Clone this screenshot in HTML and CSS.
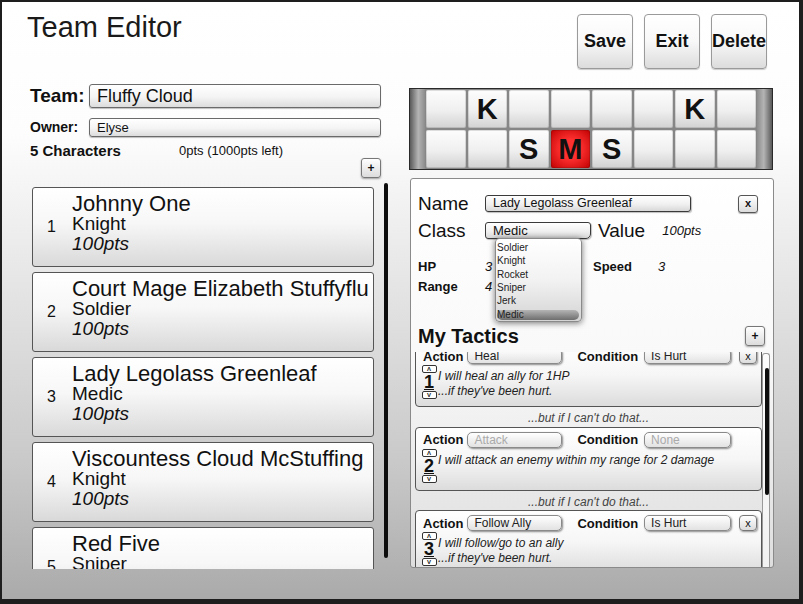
FILE: index.html
```html
<!DOCTYPE html>
<html>
<head>
<meta charset="utf-8">
<title>Team Editor</title>
<link rel="stylesheet" href="styles.css">
</head>
<body>
<div class="app">
  <header class="top">
    <h1 class="title">Team Editor</h1>
    <div class="actions">
      <button class="big-btn">Save</button>
      <button class="big-btn">Exit</button>
      <button class="big-btn">Delete</button>
    </div>
  </header>
  <div class="main">
    <section class="left">
      <div class="team-row">
        <span class="lbl-team">Team:</span>
        <div class="input team-input">Fluffy Cloud</div>
      </div>
      <div class="owner-row">
        <span class="lbl-owner">Owner:</span>
        <div class="input owner-input">Elyse</div>
      </div>
      <div class="count-row">
        <span class="count">5 Characters</span>
        <span class="pts-left">0pts (1000pts left)</span>
      </div>
      <div class="add-row"><button class="small-btn">+</button></div>
      <div class="list-wrap">
        <div class="list">
          <div class="card">
            <div class="card-num">1</div>
            <div class="card-info">
              <div class="c-name">Johnny One</div>
              <div class="c-class">Knight</div>
              <div class="c-pts">100pts</div>
            </div>
          </div>
          <div class="card">
            <div class="card-num">2</div>
            <div class="card-info">
              <div class="c-name">Court Mage Elizabeth Stuffyflu</div>
              <div class="c-class">Soldier</div>
              <div class="c-pts">100pts</div>
            </div>
          </div>
          <div class="card">
            <div class="card-num">3</div>
            <div class="card-info">
              <div class="c-name">Lady Legolass Greenleaf</div>
              <div class="c-class">Medic</div>
              <div class="c-pts">100pts</div>
            </div>
          </div>
          <div class="card">
            <div class="card-num">4</div>
            <div class="card-info">
              <div class="c-name">Viscountess Cloud McStuffing</div>
              <div class="c-class">Knight</div>
              <div class="c-pts">100pts</div>
            </div>
          </div>
          <div class="card">
            <div class="card-num">5</div>
            <div class="card-info">
              <div class="c-name">Red Five</div>
              <div class="c-class">Sniper</div>
              <div class="c-pts">100pts</div>
            </div>
          </div>
        </div>
        <div class="scrollbar"></div>
      </div>
    </section>

    <section class="right">
      <div class="board">
        <div class="cap"></div>
        <div class="cells">
          <div class="cell"></div><div class="cell">K</div><div class="cell"></div><div class="cell"></div>
          <div class="cell"></div><div class="cell"></div><div class="cell">K</div><div class="cell"></div>
          <div class="cell"></div><div class="cell"></div><div class="cell">S</div><div class="cell red">M</div>
          <div class="cell">S</div><div class="cell"></div><div class="cell"></div><div class="cell"></div>
        </div>
        <div class="cap cap-r"></div>
      </div>

      <div class="detail">
        <div class="name-row">
          <span class="d-lbl">Name</span>
          <div class="d-input">Lady Legolass Greenleaf</div>
          <button class="x-btn">x</button>
        </div>
        <div class="class-row">
          <span class="d-lbl">Class</span>
          <div class="sel-wrap">
            <div class="d-select">Medic</div>
            <div class="dropdown">
              <div class="opt">Soldier</div>
              <div class="opt">Knight</div>
              <div class="opt">Rocket</div>
              <div class="opt">Sniper</div>
              <div class="opt">Jerk</div>
              <div class="opt opt-sel">Medic</div>
            </div>
          </div>
          <span class="value-lbl">Value</span>
          <span class="value-pts">100pts</span>
        </div>
        <div class="stats">
          <span class="st-l">HP</span><span class="st-v">3</span>
          <span class="st-l">Speed</span><span class="st-v">3</span>
          <span class="st-l">Range</span><span class="st-v">4</span>
        </div>
        <div class="tac-head">
          <span class="tac-title">My Tactics</span>
          <button class="small-btn">+</button>
        </div>
        <div class="tac-view">
          <div class="tac-list">
            <div class="tac">
              <div class="tac-row">
                <span class="t-lbl">Action</span>
                <div class="t-sel act">Heal</div>
                <span class="t-lbl cond-lbl">Condition</span>
                <div class="t-sel cond">Is Hurt</div>
                <button class="t-x">x</button>
              </div>
              <div class="tac-body">
                <div class="arrows">
                  <div class="arr">&#923;</div>
                  <div class="t-num">1</div>
                  <div class="arr arr-d">V</div>
                </div>
                <div class="desc">
                  <div>I will heal an ally for 1HP</div>
                  <div>...if they've been hurt.</div>
                </div>
              </div>
            </div>
            <div class="sep">...but if I can't do that...</div>
            <div class="tac">
              <div class="tac-row">
                <span class="t-lbl">Action</span>
                <div class="t-sel act dim">Attack</div>
                <span class="t-lbl cond-lbl">Condition</span>
                <div class="t-sel cond dim">None</div>
              </div>
              <div class="tac-body">
                <div class="arrows">
                  <div class="arr">&#923;</div>
                  <div class="t-num">2</div>
                  <div class="arr arr-d">V</div>
                </div>
                <div class="desc">
                  <div>I will attack an enemy within my range for 2 damage</div>
                </div>
              </div>
            </div>
            <div class="sep">...but if I can't do that...</div>
            <div class="tac">
              <div class="tac-row">
                <span class="t-lbl">Action</span>
                <div class="t-sel act">Follow Ally</div>
                <span class="t-lbl cond-lbl">Condition</span>
                <div class="t-sel cond">Is Hurt</div>
                <button class="t-x">x</button>
              </div>
              <div class="tac-body">
                <div class="arrows">
                  <div class="arr">&#923;</div>
                  <div class="t-num">3</div>
                  <div class="arr arr-d">V</div>
                </div>
                <div class="desc">
                  <div>I will follow/go to an ally</div>
                  <div>...if they've been hurt.</div>
                </div>
              </div>
            </div>
          </div>
          <div class="track"><div class="thumb"></div></div>
        </div>
      </div>
    </section>
  </div>
</div>
</body>
</html>
```

FILE: styles.css
```css
* { box-sizing: border-box; }
html, body { margin: 0; padding: 0; }
body {
  background: #1e1e1e;
  width: 803px;
  height: 604px;
  overflow: hidden;
  font-family: "Liberation Sans", Arial, sans-serif;
  color: #111;
}
button { font-family: "Liberation Sans", Arial, sans-serif; color: #111; cursor: pointer; }

.app {
  margin: 2px 0 0 2px;
  width: 797px;
  height: 597px;
  background: linear-gradient(to bottom, #ffffff 0%, #fdfdfd 22%, #c8c8c8 78%, #aaaaaa 100%);
  display: flex;
  flex-direction: column;
}

/* header */
.top { display: flex; height: 78px; flex: none; }
.title {
  margin: 11px 0 0 25px;
  font-size: 29px;
  font-weight: normal;
  line-height: 29px;
  color: #1a1a1a;
}
.actions { margin: 12px 32px 0 auto; display: flex; gap: 11px; align-items: flex-start; }
.big-btn {
  width: 56px;
  height: 55px;
  padding: 0;
  border: 1px solid #9a9a9a;
  border-radius: 4px;
  background: linear-gradient(#ffffff 0%, #f8f8f8 50%, #dcdcdc 100%);
  font-weight: bold;
  font-size: 18px;
  box-shadow: 0 1px 1px rgba(0,0,0,.2);
}

/* main */
.main { display: flex; flex: 1; min-height: 0; }
.left { width: 407px; padding: 0 28px 0 28px; flex: none; }

.team-row { display: flex; align-items: center; margin-top: 4px; height: 24px; }
.lbl-team { width: 59px; font-weight: bold; font-size: 19px; flex: none; }
.input {
  border: 1px solid #6a6a6a;
  border-radius: 3px;
  background: linear-gradient(#ffffff, #f4f4f4 55%, #dcdcdc);
  box-shadow: 0 1px 1px rgba(0,0,0,.25);
  color: #111;
}
.team-input { width: 297px; height: 24px; font-size: 18px; line-height: 22px; padding-left: 7px; }
.owner-row { display: flex; align-items: center; margin-top: 9px; height: 20px; }
.lbl-owner { width: 59px; font-weight: bold; font-size: 14px; flex: none; }
.owner-input { width: 297px; height: 19px; font-size: 13px; line-height: 17px; padding-left: 7px; }
.count-row { display: flex; margin-top: 6px; line-height: 15px; height: 15px; }
.count { width: 149px; font-weight: bold; font-size: 15px; flex: none; }
.pts-left { font-size: 13px; }
.add-row { display: flex; justify-content: flex-end; height: 20px; }

.small-btn {
  width: 20px;
  height: 20px;
  padding: 0;
  border: 1px solid #777;
  border-radius: 3px;
  background: linear-gradient(#ffffff, #dcdcdc);
  font-weight: bold;
  font-size: 12px;
  line-height: 18px;
  box-shadow: 0 1px 2px rgba(0,0,0,.35);
}

.list-wrap { display: flex; margin-top: 5px; }
.list { width: 342px; margin-left: 2px; height: 386px; padding-top: 4px; overflow: hidden; flex: none; }
.scrollbar { width: 4px; height: 375px; margin-left: 10px; background: #0d0d0d; border-radius: 2px; flex: none; }

.card {
  display: flex;
  height: 80px;
  margin-bottom: 5px;
  border: 1px solid #555;
  border-radius: 3px;
  background: linear-gradient(#ffffff 0%, #f7f7f7 45%, #d9d9d9 100%);
}
.card-num { width: 39px; flex: none; padding-left: 14px; font-size: 16px; line-height: 16px; align-self: center; }
.card-info { padding-top: 5px; white-space: nowrap; min-width: 0; overflow: hidden; }
.c-name { font-size: 22px; line-height: 21px; }
.c-class { font-size: 19px; line-height: 20px; }
.c-pts { font-size: 19px; line-height: 20px; font-style: italic; }

/* right column */
.right { width: 366px; margin-top: 8px; flex: none; }

.board { display: flex; width: 364px; height: 82px; border: 1px solid #2a2a2a; background: #868686; }
.cap { width: 15px; background: linear-gradient(to right, #5a5a5a, #b4b4b4 55%, #8c8c8c); }
.cap-r { background: linear-gradient(to left, #5a5a5a, #b4b4b4 55%, #8c8c8c); }
.cells {
  flex: 1;
  display: grid;
  grid-template-columns: repeat(8, 1fr);
  grid-template-rows: repeat(2, 1fr);
  gap: 2px;
  padding: 1px;
}
.cell {
  border-radius: 2px;
  background: linear-gradient(#fdfdfd 0%, #efefef 55%, #d2d2d2 100%);
  box-shadow: inset 0 0 0 1px rgba(0,0,0,.12);
  font-weight: bold;
  font-size: 29px;
  line-height: 38px;
  text-align: center;
  color: #111;
}
.cell.red { background: radial-gradient(ellipse at center, #ff3030 35%, #d41010 80%, #b00 100%); }

.detail {
  margin-top: 8px;
  margin-left: 1px;
  width: 364px;
  height: 390px;
  border: 1px solid #8a8a8a;
  border-radius: 3px;
  background: linear-gradient(#ffffff 0%, #f9f9f9 45%, #dedede 100%);
  padding: 15px 8px 0 7px;
  display: flex;
  flex-direction: column;
}
.name-row { display: flex; align-items: center; height: 19px; padding-right: 7px; flex: none; }
.d-lbl { width: 67px; font-size: 19px; line-height: 19px; flex: none; }
.d-input {
  width: 206px;
  height: 17px;
  border: 1px solid #3a3a3a;
  border-radius: 3px;
  background: linear-gradient(#ffffff, #f0f0f0 55%, #d8d8d8);
  box-shadow: 1px 1px 1px rgba(0,0,0,.25);
  font-size: 12.5px;
  line-height: 15px;
  padding-left: 7px;
}
.x-btn {
  margin-left: auto;
  width: 20px;
  height: 18px;
  padding: 0;
  border: 1px solid #555;
  border-radius: 3px;
  background: linear-gradient(#ffffff, #dcdcdc);
  font-weight: bold;
  font-size: 11px;
  line-height: 15px;
  box-shadow: 0 1px 1px rgba(0,0,0,.3);
}
.class-row { display: flex; align-items: center; margin-top: 8px; height: 19px; flex: none; position: relative; z-index: 2; }
.sel-wrap { position: relative; }
.d-select {
  width: 106px;
  height: 17px;
  border: 1px solid #3a3a3a;
  border-radius: 3px 3px 5px 3px;
  background: linear-gradient(#ffffff, #f0f0f0 55%, #d8d8d8);
  box-shadow: 1px 1px 1px rgba(0,0,0,.25);
  font-size: 13px;
  line-height: 15px;
  padding-left: 7px;
}
.dropdown {
  position: absolute;
  left: 10px;
  top: 16px;
  width: 87px;
  height: 84px;
  border: 1px solid #8a8a8a;
  border-radius: 4px;
  background: linear-gradient(#ffffff, #f2f2f2 50%, #d4d4d4);
  box-shadow: 0 1px 6px rgba(0,0,0,.55);
  padding: 2px 2px 0 1px;
  font-size: 10px;
  line-height: 13.3px;
  color: #222;
}
.opt-sel {
  margin-top: 3px;
  line-height: 10px;
  height: 10px;
  border-radius: 5px;
  background: linear-gradient(#b4b4b4, #6e6e6e);
  color: #222;
}
.value-lbl { margin-left: 7px; font-size: 19px; }
.value-pts { margin-left: 17px; font-size: 13px; font-style: italic; }

.stats {
  margin-top: 17px;
  display: grid;
  grid-template-columns: 67px 108px 65px auto;
  grid-auto-rows: 20px;
  line-height: 20px;
  font-size: 13px;
  flex: none;
}
.st-l { font-weight: bold; }
.st-v { font-style: italic; }

.tac-head { margin-top: 29px; height: 20px; display: flex; align-items: center; justify-content: space-between; flex: none; }
.tac-title { font-size: 20px; font-weight: bold; }

.tac-view { flex: 1; min-height: 0; margin: 6px -5px 0 -4px; display: flex; overflow: hidden; }
.tac-list { width: 348px; padding-left: 1px; margin-top: -9px; flex: none; }
.tac {
  height: 64px;
  border: 1px solid #555;
  border-radius: 4px;
  background: linear-gradient(#ffffff 0%, #f6f6f6 50%, #dcdcdc 100%);
}
.tac-row { display: flex; align-items: center; height: 16px; margin-top: 4px; padding-left: 7px; }
.t-lbl { font-weight: bold; font-size: 13px; }
.t-sel {
  height: 16px;
  border: 1px solid #8a8a8a;
  border-radius: 5px;
  background: linear-gradient(#ffffff, #e2e2e2);
  box-shadow: 1px 1px 2px rgba(0,0,0,.45);
  font-size: 12px;
  line-height: 14px;
  padding-left: 6px;
  color: #222;
}
.t-sel.act { width: 95px; margin-left: 4px; }
.t-sel.cond { width: 87px; margin-left: 6px; }
.t-sel.dim { color: #aaa; }
.cond-lbl { margin-left: 15px; }
.t-x {
  width: 18px;
  height: 16px;
  margin-left: 8px;
  padding: 0;
  border: 1px solid #777;
  border-radius: 4px;
  background: linear-gradient(#ffffff, #dcdcdc);
  box-shadow: 1px 1px 2px rgba(0,0,0,.4);
  font-size: 11px;
  line-height: 13px;
}
.tac-body { display: flex; }
.arrows { width: 16px; flex: none; margin-left: 5px; display: flex; flex-direction: column; align-items: center; }
.arr {
  width: 15px;
  height: 8px;
  margin-top: 1px;
  border: 1px solid #333;
  border-radius: 2px;
  background: #fff;
  font-size: 6px;
  line-height: 6px;
  text-align: center;
  font-weight: bold;
}
.arr-d { margin-top: 0; }
.t-num { font-size: 18px; font-weight: bold; line-height: 18px; text-decoration: underline; text-decoration-thickness: 1px; }
.desc { margin-left: 1px; padding-top: 5px; font-size: 12px; font-style: italic; line-height: 15px; color: #222; white-space: nowrap; }
.sep { height: 19.5px; text-align: center; font-size: 12px; font-style: italic; color: #444; line-height: 22px; }

.track {
  width: 8px;
  margin-top: 1px;
  border: 1px solid #9a9a9a;
  border-bottom: none;
  border-radius: 3px 3px 0 0;
  background: rgba(255,255,255,.6);
  flex: none;
}
.thumb { margin: 14px 0 0 2px; width: 4px; height: 127px; background: #0d0d0d; border-radius: 2px; }
```
